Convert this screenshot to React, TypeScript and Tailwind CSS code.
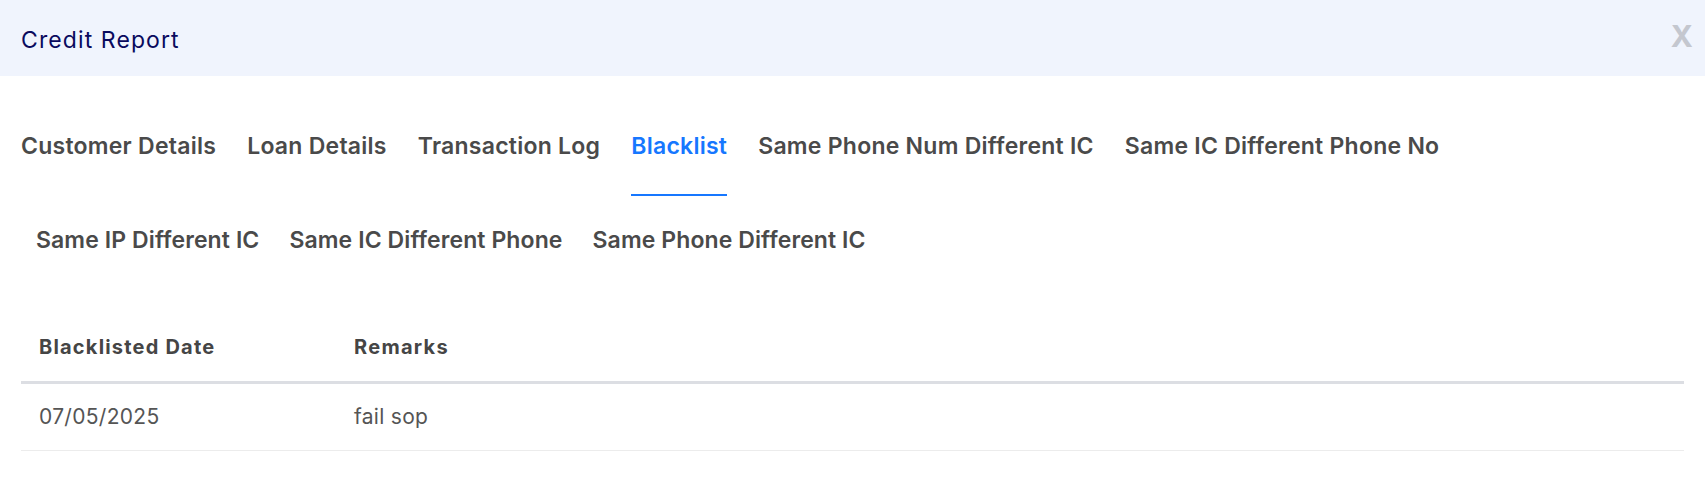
const ROW_ONE = [
  "Customer Details",
  "Loan Details",
  "Transaction Log",
  "Blacklist",
  "Same Phone Num Different IC",
  "Same IC Different Phone No",
];
const ROW_TWO = ["Same IP Different IC", "Same IC Different Phone", "Same Phone Different IC"];

const ACTIVE = "Blacklist";

const rows = [{ date: "07/05/2025", remarks: "fail sop" }];

function Tab({ label, tight }: { label: string; tight?: boolean }) {
  const active = label === ACTIVE;
  return (
    <button
      type="button"
      className={`border-b-2 pt-0 pb-[32px] text-[23px] leading-[32px] font-semibold whitespace-nowrap ${
        tight ? "tracking-[0.1px]" : "tracking-[0.25px]"
      } ${active ? "border-[#1677ff] text-[#1677ff]" : "border-transparent text-[#4a4a4a]"}`}
    >
      {label}
    </button>
  );
}

export default function App() {
  return (
    <div className="min-h-[488px] w-full bg-white font-['Inter',sans-serif]">
      {/* modal header */}
      <div className="flex h-[76px] items-center justify-between bg-[#f0f4fd] pt-1 pl-[21px] pr-[12px]">
        <h2 className="text-[23px] leading-[32px] font-normal tracking-[1.1px] text-[#0a0a5e]">Credit Report</h2>
        <button type="button" className="pb-[9px] text-[30px] leading-none font-bold text-[#c4c7cf]">
          X
        </button>
      </div>

      <div className="px-[21px]">
        {/* tabs */}
        <div className="mt-[54px] flex gap-[31px]">
          {ROW_ONE.map((t) => (
            <Tab key={t} label={t} />
          ))}
        </div>
        <div className="mt-[28px] flex gap-[30px] pl-[15px]">
          {ROW_TWO.map((t) => (
            <Tab key={t} label={t} tight />
          ))}
        </div>

        {/* blacklist table */}
        <div className="mt-[23px] w-full">
          <div className="grid grid-cols-[315px_1fr] border-b-[3px] border-[#dcdee3]">
            <div className="flex h-[68px] items-center pl-[18px] text-[20px] font-bold tracking-[1.2px] text-[#454545]">
              Blacklisted Date
            </div>
            <div className="flex h-[68px] items-center pl-[18px] text-[20px] font-bold tracking-[1.3px] text-[#454545]">
              Remarks
            </div>
          </div>
          {rows.map((r) => (
            <div key={r.date} className="grid grid-cols-[315px_1fr] border-b border-[#ececec]">
              <div className="flex h-[66px] items-center pl-[18px] text-[21px] tracking-[0.3px] text-[#555]">
                {r.date}
              </div>
              <div className="flex h-[66px] items-center pl-[18px] text-[21px] tracking-[0.3px] text-[#555]">
                {r.remarks}
              </div>
            </div>
          ))}
        </div>
      </div>
    </div>
  );
}
